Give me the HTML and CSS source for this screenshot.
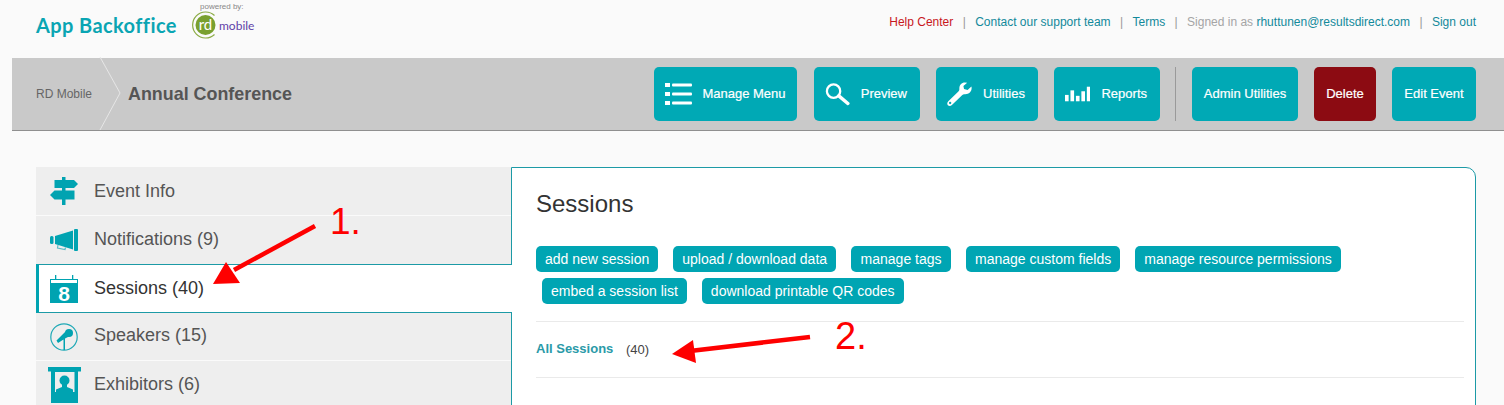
FILE: index.html
```html
<!DOCTYPE html>
<html lang="en">
<head>
<meta charset="utf-8">
<title>Annual Conference</title>
<link rel="stylesheet" href="styles.css">
</head>
<body>
<div class="page">
  <header class="top">
    <div class="brand">
      <span class="app-name">App Backoffice</span>
      <div class="powered">
        <span class="powered-label">powered by:</span>
        <div class="rd-logo">
          <svg class="rd-mark" viewBox="0 0 28 28" width="28" height="28">
            <path d="M22.500 4.500 A13 13 0 1 0 22.500 23.500" fill="none" stroke="#8bab45" stroke-width="1.200"/>
            <circle cx="13.500" cy="14" r="10" fill="#79a02f"/>
            <text x="13.500" y="18.500" text-anchor="middle" class="rd-letters">rd</text>
          </svg>
          <span class="rd-word">mobile</span>
        </div>
      </div>
    </div>
    <nav class="top-links">
      <a class="help">Help Center</a><span class="pipe">|</span>
      <a>Contact our support team</a><span class="pipe">|</span>
      <a>Terms</a><span class="pipe">|</span>
      <span class="signed">Signed in as <a>rhuttunen@resultsdirect.com</a></span><span class="pipe">|</span>
      <a>Sign out</a>
    </nav>
  </header>

  <section class="bar">
    <div class="crumbs">
      <span class="crumb">RD Mobile</span>
      <svg class="chevron" viewBox="0 0 22 73" width="22" height="73"><path d="M1 0 L21 36 L1 73" fill="none" stroke="#e6e6e6" stroke-width="1"/></svg>
      <span class="event-title">Annual Conference</span>
    </div>
    <div class="actions">
      <a class="act act-menu">
        <svg viewBox="0 0 28 24" width="28" height="24" fill="#fff"><rect x="0" y="1" width="5" height="4"/><rect x="7" y="1.500" width="20" height="3" rx="1"/><rect x="0" y="10" width="5" height="4"/><rect x="7" y="10.500" width="20" height="3" rx="1"/><rect x="0" y="19" width="5" height="4"/><rect x="7" y="19.500" width="20" height="3" rx="1"/></svg>
        <span>Manage Menu</span>
      </a>
      <a class="act act-preview">
        <svg viewBox="0 0 26 24" width="26" height="24" fill="none" stroke="#fff"><circle cx="9" cy="9" r="7" stroke-width="2.400"/><path d="M14.500 14 L24 22" stroke-width="3.600" stroke-linecap="round"/></svg>
        <span>Preview</span>
      </a>
      <a class="act act-util">
        <svg viewBox="0 0 28 28" width="27" height="27"><path fill="#fff" d="M20 0.500 C16 0.500 13.500 3.500 13.800 7.800 C13.900 9 13.500 9.800 12.700 10.600 L1.500 21.500 C-0.300 23.300 0.200 25.200 1 26 C2 27 3.800 27.400 5.500 25.800 L16.800 14.700 C17.600 13.900 18.500 13.600 19.700 13.700 C24.200 14 27.500 11 27.500 6.500 L27.200 5 L23 9 L19 8 L18.300 4.500 L22.500 0.800 Z"/><circle cx="3.500" cy="23.500" r="1.300" fill="#00a9b5"/></svg>
        <span>Utilities</span>
      </a>
      <a class="act act-reports">
        <svg viewBox="0 0 28 16" width="28" height="16" fill="#fff"><rect x="0" y="9" width="4" height="7"/><rect x="6" y="4" width="4" height="12"/><rect x="12" y="10" width="4" height="6"/><rect x="18" y="5" width="4" height="11"/><rect x="24" y="0" width="4" height="16"/></svg>
        <span>Reports</span>
      </a>
      <span class="divider"></span>
      <a class="act act-admin"><span>Admin Utilities</span></a>
      <a class="act act-delete"><span>Delete</span></a>
      <a class="act act-edit"><span>Edit Event</span></a>
    </div>
  </section>

  <main class="content">
    <ul class="side">
      <li class="item item-first">
        <svg class="ico" viewBox="0 0 28 28" width="28" height="28" fill="#00a3b1"><rect x="12" y="0" width="3.500" height="28"/><path d="M4.500 3 H24 L28 7 L24 11 H4.500 Z"/><path d="M24.500 13.500 H4.500 L0 18 L4.500 22.500 H24.500 Z"/></svg>
        <span>Event Info</span>
      </li>
      <li class="item">
        <svg class="ico" viewBox="0 0 28 22" width="28" height="22" fill="#00a3b1"><rect x="0" y="7" width="3.500" height="8" rx="1.500"/><path d="M5 7 L23 1.500 V20.500 L5 15 Z"/><rect x="24" y="0" width="4" height="22" rx="1"/><path d="M8 16 L7.500 19 L15 20.500 L15.500 18.500" fill="none" stroke="#5bbcc6" stroke-width="1.200"/></svg>
        <span>Notifications (9)</span>
      </li>
      <li class="item item-on">
        <svg class="ico" viewBox="0 0 28 28" width="28" height="28"><rect x="0" y="4" width="28" height="1" fill="#00a3b1"/><rect x="0" y="8" width="28" height="20" fill="#00a3b1"/><rect x="0" y="4" width="1" height="5" fill="#00a3b1"/><rect x="27" y="4" width="1" height="5" fill="#00a3b1"/><rect x="5" y="0" width="1.300" height="5" fill="#00a3b1"/><rect x="22" y="0" width="1.300" height="5" fill="#00a3b1"/><text x="14" y="25.500" text-anchor="middle" class="cal-num">8</text></svg>
        <span>Sessions (40)</span>
      </li>
      <li class="item item-short">
        <svg class="ico" viewBox="0 0 28 28" width="28" height="28" fill="none"><circle cx="14" cy="14" r="13.200" stroke="#1fa9b6" stroke-width="1.200"/><path d="M6.500 17.500 L15.500 8.500 L20 13 L15 15.500 V27 H13.500 V16.500 L8 20 Z" fill="#00a3b1"/><circle cx="19" cy="10" r="4" fill="#00a3b1"/></svg>
        <span>Speakers (15)</span>
      </li>
      <li class="item item-last">
        <svg class="ico" viewBox="0 0 33 37" width="33" height="37"><rect x="0" y="0" width="33" height="4.500" fill="#00a3b1"/><rect x="3" y="4" width="27" height="32" fill="#00a3b1"/><rect x="7" y="5" width="19.500" height="20" fill="#eee"/><circle cx="16.500" cy="13.500" r="5" fill="#00a3b1"/><path d="M14 17 H19 V20 L25 22.500 V26 H8 V22.500 L14 20 Z" fill="#00a3b1"/></svg>
        <span>Exhibitors (6)</span>
      </li>
    </ul>
    <section class="panel">
      <h1 class="panel-title">Sessions</h1>
      <div class="pills">
        <a class="pill">add new session</a>
        <a class="pill">upload / download data</a>
        <a class="pill pill-wide">manage tags</a>
        <a class="pill">manage custom fields</a>
        <a class="pill">manage resource permissions</a>
      </div>
      <div class="pills pills-second">
        <a class="pill">embed a session list</a>
        <a class="pill">download printable QR codes</a>
      </div>
      <div class="list-row">
        <a class="list-link">All Sessions</a>
        <span class="list-count">(40)</span>
      </div>
    </section>
  </main>

  <svg class="marks" viewBox="0 0 1504 405" width="1504" height="405" aria-hidden="true">
    <path d="M315 226 L234 270" stroke="#fe0000" stroke-width="4.500" fill="none"/>
    <path d="M213 284 L226 262 L240 283 Z" fill="#fe0000"/>
    <path d="M810 337 L690 351" stroke="#fe0000" stroke-width="4.500" fill="none"/>
    <path d="M672 354 L693 340 L696 363 Z" fill="#fe0000"/>
  </svg>
  <span class="note note-one">1.</span>
  <span class="note note-two">2.</span>
</div>
</body>
</html>
```
FILE: styles.css
```css
* { box-sizing: border-box; }
html, body { margin: 0; height: 405px; overflow: hidden; }
body { background: #fafafa; font-family: "Liberation Sans", Arial, sans-serif; color: #555; }
a { color: inherit; text-decoration: none; }
ul { list-style: none; margin: 0; padding: 0; }

.page { position: relative; width: 1504px; height: 405px; overflow: hidden; }

.top { height: 58px; display: flex; justify-content: space-between; padding: 0 28px 0 36px; }
.brand { display: flex; align-items: flex-start; }
.app-name { font-family: Lato, sans-serif; font-weight: 700; font-size: 20px; letter-spacing: 0.4px; color: #0aa5b3; margin-top: 13px; width: 156px; white-space: nowrap; }
.powered { display: flex; flex-direction: column; }
.powered-label { font-size: 8px; line-height: 9px; color: #888; margin: 2px 0 0 8px; }
.rd-logo { display: flex; align-items: center; }
.rd-mark { display: block; }
.rd-letters { font-family: Lato, sans-serif; font-size: 15px; fill: #fff; }
.rd-word { font-family: Lato, sans-serif; font-size: 12px; color: #5f3fa8; margin-left: -1px; }

.top-links { display: flex; align-items: flex-start; font-size: 12px; line-height: 14px; padding-top: 15px; color: #12899a; white-space: nowrap; }
.help { color: #c8171d; }
.pipe { color: #999; margin: 0 9.400px; }
.signed { color: #a5a5a5; }
.signed a { color: #12899a; }

.bar { height: 73px; margin-left: 12px; background: #c9c9c9; border-bottom: 1px solid #8f8f8f; display: flex; justify-content: space-between; padding-right: 28px; }
.crumbs { display: flex; align-items: center; }
.crumb { font-size: 12px; color: #666; margin-left: 24px; width: 63px; white-space: nowrap; }
.chevron { display: block; flex: none; margin-top: -1px; }
.event-title { font-size: 17.900px; font-weight: 700; color: #555; margin-left: 7px; }

.actions { display: flex; align-items: flex-start; padding-top: 9px; gap: 16px; }
.act { height: 54px; padding: 0 11px 2px; background: #00a9b5; border-radius: 5px; color: #fff; font-size: 13px; -webkit-text-stroke: 0.2px #fff; display: flex; align-items: center; justify-content: center; white-space: nowrap; }
.act svg { margin-top: 2px; }
.act-menu { width: 143px; gap: 9px; margin-right: 1px; }
.act-preview { width: 106px; gap: 11px; padding-right: 13px; }
.act-util { width: 102px; gap: 11px; padding-right: 13px; }
.act-reports { width: 106px; gap: 11px; padding-right: 13px; }
.act-admin { width: 106px; }
.act-delete { width: 62px; background: #8c0b12; }
.act-edit { width: 84px; }
.divider { width: 1px; height: 54px; background: #9a9a9a; margin-left: -1px; }

.content { display: flex; padding: 36px 28px 0 36px; }
.side { width: 475px; flex: none; }
.item { height: 48px; margin-bottom: 1px; background: #eee; display: flex; align-items: center; font-size: 18px; color: #555; position: relative; }
.item span { margin: 0 0 2px 58px; }
.item-first span { margin-bottom: 0; }
.ico { position: absolute; left: 14px; top: 50%; transform: translateY(-50%); }
.item-on { background: #fff; color: #333; height: 49px; width: 476px; margin: -1px -1px 0 0; z-index: 2; border: 1px solid #1c9aa6; border-left: 3px solid #00a3b1; border-right: 0; }
.item-on span { margin: 0 0 0 55px; }
.item-on .ico { left: 11px; }
.item-short { height: 47px; }
.item-last .ico { left: 12px; top: 6px; transform: none; }

.panel { flex: 1; height: 260px; background: #fff; border: 1px solid #1c9aa6; border-radius: 0 10px 0 0; padding: 0 11px 0 24px; }
.panel-title { font-size: 24px; font-weight: 400; color: #333; margin: 22px 0 0; line-height: 28px; }
.pills { display: flex; gap: 15px; margin-top: 28px; }
.pills-second { margin-top: 6px; padding-left: 6px; }
.pill { height: 26px; line-height: 26px; padding: 0 9px; background: #00a5b3; color: #fff; border-radius: 5px; font-size: 14px; white-space: nowrap; }
.pill-wide { padding: 0 9.500px; }
.list-row { margin-top: 17px; height: 57px; padding-bottom: 2px; border-top: 1px solid #eaeaea; border-bottom: 1px solid #eaeaea; display: flex; align-items: center; }
.list-link { font-size: 13px; font-weight: 700; color: #2a9aa8; width: 90px; }
.list-count { font-size: 13px; color: #444; margin-top: 1px; }

.marks { position: absolute; left: 0; top: 0; pointer-events: none; z-index: 5; }
.note { position: absolute; color: #fe0000; line-height: 40px; z-index: 5; }
.note-one { left: 330px; top: 202px; font-size: 37px; }
.note-two { left: 835px; top: 316px; font-size: 38px; }
.cal-num { font-family: "Liberation Sans", Arial, sans-serif; font-size: 21px; font-weight: 700; fill: #fff; }
```
